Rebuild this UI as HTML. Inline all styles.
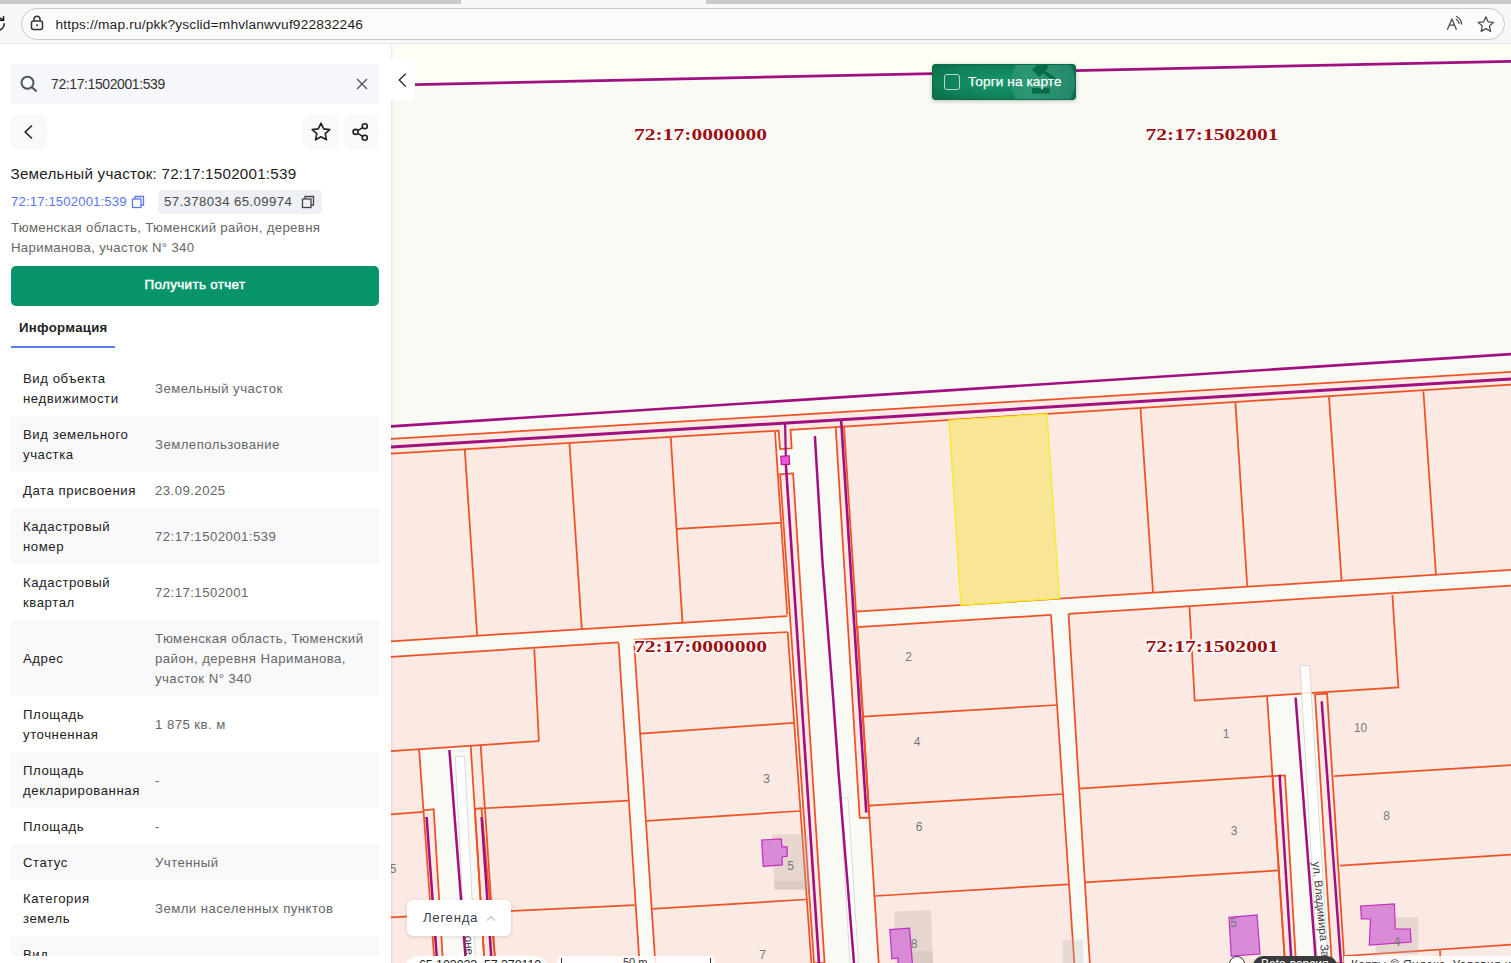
<!DOCTYPE html>
<html><head><meta charset="utf-8">
<style>
*{box-sizing:border-box;margin:0;padding:0}
html,body{width:1511px;height:963px;overflow:hidden;background:#fff;font-family:"Liberation Sans",sans-serif;}
.abs{position:absolute}
#chrome{position:absolute;left:0;top:0;width:1511px;height:44px;background:#f7f7f7;border-bottom:1px solid #e9e9e9}
#tabstrip{position:absolute;left:0;top:0;width:1511px;height:4px;background:#cbcbcb}
#tabgap{position:absolute;left:461px;top:0;width:245px;height:4px;background:#f7f7f7;border-radius:0 0 0 0}
#addr{position:absolute;left:21px;top:8px;width:1484px;height:32px;border:1px solid #c9c9c9;border-radius:16px;background:#fcfcfc}
#url{position:absolute;left:55.5px;top:16.5px;font-size:13.7px;color:#1f1f1f;letter-spacing:0.18px;white-space:nowrap}
#panel{position:absolute;left:0;top:44px;width:391px;height:919px;background:#fff}
.search{position:absolute;left:11px;top:64px;width:368px;height:40px;background:#f6f7fa;border-radius:2px}
.sq{position:absolute;width:36px;height:36px;border-radius:8px;background:#f8f9fb}
.title{position:absolute;left:10.5px;top:164.5px;font-size:15.2px;color:#1e1e1e;white-space:nowrap;letter-spacing:0.23px}
.link{position:absolute;left:11px;top:194px;font-size:13.2px;color:#5a78f0;white-space:nowrap;letter-spacing:0.12px}
.chip{position:absolute;left:158px;top:190px;width:164px;height:24px;background:#eef0f5;border-radius:4px}
.chiptext{position:absolute;left:164px;top:194px;font-size:13.2px;color:#4a4a4a;white-space:nowrap;letter-spacing:0.4px}
.addrtext{position:absolute;left:11px;top:217.5px;font-size:13.2px;line-height:20px;color:#666;width:370px;letter-spacing:0.34px}
.btn{position:absolute;left:11px;top:266px;width:368px;height:40px;background:#06946a;border-radius:5px;color:#fff;font-size:13.4px;font-weight:normal;-webkit-text-stroke:0.45px #fff;letter-spacing:0.35px;text-align:center;line-height:38px}
.tab{position:absolute;left:19px;top:319.5px;font-size:13.2px;font-weight:bold;color:#222;letter-spacing:0.3px}
.tabline{position:absolute;left:11px;top:345.5px;width:104px;height:2px;background:#5a7cf5}
table{position:absolute;left:11px;top:360px;width:368px;border-collapse:collapse}
td{font-size:13.2px;line-height:20px;padding:9px 0 7px 12px;vertical-align:middle}
td.l{color:#222;width:133px;letter-spacing:0.55px}
td.v{color:#666;padding-left:11px;letter-spacing:0.45px}
tr:nth-child(even){background:#f9f9fb}
#map{position:absolute;left:391px;top:44px;width:1120px;height:919px;overflow:hidden;background:#fafaf4}
#mapsvg{position:absolute;left:0;top:0}
</style></head><body>
<div id="chrome">
  <div id="tabstrip"></div>
  <div id="tabgap"></div>
  <div id="addr"></div>
  <svg class="abs" style="left:0;top:14px" width="8" height="20" viewBox="0 0 8 20"><path d="M4.4 9.2 A7.3 7.3 0 0 1 -2.5 16.6" fill="none" stroke="#222" stroke-width="1.5"/><path d="M3.5 2.2 V6.3 H-1" fill="none" stroke="#111" stroke-width="1.6"/><path d="M-1 3.6 Q1.2 4.2 2.9 5.9" fill="none" stroke="#222" stroke-width="1.3"/></svg>
  <svg class="abs" style="left:30px;top:15px" width="14" height="16" viewBox="0 0 14 16"><rect x="1.5" y="6" width="11" height="8.5" rx="2" fill="none" stroke="#333" stroke-width="1.5"/><path d="M4 6 V4.3 A3 3 0 0 1 10 4.3 V6" fill="none" stroke="#333" stroke-width="1.5"/><circle cx="7" cy="10.2" r="1" fill="#333"/></svg>
  <div id="url">https://map.ru/pkk?ysclid=mhvlanwvuf922832246</div>
  <svg class="abs" style="left:1440px;top:10px" width="60" height="26" viewBox="1440 10 60 26"><path d="M1447.3 29.7 L1451.9 18.9 L1456.5 29.7 M1448.9 25.1 H1454.9" fill="none" stroke="#4a4a4a" stroke-width="1.25" stroke-linejoin="round"/><path d="M1456.4 16.3 Q1461.2 19.2 1461.6 24.1 M1456.2 19.2 Q1458.7 20.9 1459.1 23.5" fill="none" stroke="#4a4a4a" stroke-width="1.2" stroke-linecap="round"/><path d="M1485.90,16.80 L1488.10,21.84 L1493.58,22.38 L1489.47,26.03 L1490.64,31.40 L1485.90,28.62 L1481.16,31.40 L1482.33,26.03 L1478.22,22.38 L1483.70,21.84 Z" fill="none" stroke="#4a4a4a" stroke-width="1.25" stroke-linejoin="round"/></svg>
</div>

<div id="panel"></div>
<div class="search"></div>
<svg class="abs" style="left:19px;top:75px" width="20" height="18" viewBox="0 0 20 18"><circle cx="8.5" cy="7.8" r="6" fill="none" stroke="#4e5560" stroke-width="2"/><path d="M13 12.2 L17.5 16.5" stroke="#4e5560" stroke-width="2"/></svg>
<div class="abs" style="left:51px;top:75.5px;font-size:14px;color:#333;letter-spacing:-0.4px">72:17:1502001:539</div>
<svg class="abs" style="left:356px;top:78px" width="12" height="12" viewBox="0 0 12 12"><path d="M1 1 L11 11 M11 1 L1 11" stroke="#555" stroke-width="1.4"/></svg>

<div class="sq" style="left:11px;top:114px"></div>
<svg class="abs" style="left:22px;top:123px" width="14" height="18" viewBox="0 0 14 18"><path d="M10 2.5 L3.2 9 L10 15.5" fill="none" stroke="#222" stroke-width="1.6"/></svg>
<div class="sq" style="left:303px;top:114px"></div>
<svg class="abs" style="left:310px;top:121px" width="22" height="22" viewBox="0 0 22 22"><path d="M11 2.2 L13.7 7.9 L19.8 8.6 L15.2 12.7 L16.5 18.8 L11 15.7 L5.5 18.8 L6.8 12.7 L2.2 8.6 L8.3 7.9 Z" fill="none" stroke="#222" stroke-width="1.6" stroke-linejoin="round"/></svg>
<div class="sq" style="left:343px;top:114px"></div>
<svg class="abs" style="left:350px;top:121px" width="22" height="22" viewBox="0 0 22 22"><circle cx="14.8" cy="5.2" r="2.5" fill="none" stroke="#222" stroke-width="1.6"/><circle cx="5.6" cy="10.9" r="2.5" fill="none" stroke="#222" stroke-width="1.6"/><circle cx="14.8" cy="16.8" r="2.5" fill="none" stroke="#222" stroke-width="1.6"/><path d="M7.8 9.6 L12.6 6.6 M7.8 12.3 L12.6 15.4" stroke="#222" stroke-width="1.6"/></svg>

<div class="title">Земельный участок: 72:17:1502001:539</div>
<div class="link">72:17:1502001:539</div>
<svg class="abs" style="left:131px;top:195px" width="14" height="14" viewBox="0 0 14 14"><rect x="1.5" y="4" width="8.5" height="8.5" fill="none" stroke="#5a78f0" stroke-width="1.3"/><path d="M4 4 V1.5 H12.5 V10 H10" fill="none" stroke="#5a78f0" stroke-width="1.3"/></svg>
<div class="chip"></div>
<div class="chiptext">57.378034 65.09974</div>
<svg class="abs" style="left:301px;top:195px" width="14" height="14" viewBox="0 0 14 14"><rect x="1.5" y="4" width="8.5" height="8.5" fill="none" stroke="#444" stroke-width="1.3"/><path d="M4 4 V1.5 H12.5 V10 H10" fill="none" stroke="#444" stroke-width="1.3"/></svg>
<div class="addrtext">Тюменская область, Тюменский район, деревня<br>Нариманова, участок N° 340</div>
<div class="btn">Получить отчет</div>
<div class="tab">Информация</div>
<div class="tabline"></div>
<table>
<tr style="height:56px"><td class="l">Вид объекта<br>недвижимости</td><td class="v">Земельный участок</td></tr>
<tr style="height:56px"><td class="l">Вид земельного<br>участка</td><td class="v">Землепользование</td></tr>
<tr style="height:36px"><td class="l">Дата присвоения</td><td class="v">23.09.2025</td></tr>
<tr style="height:56px"><td class="l">Кадастровый<br>номер</td><td class="v">72:17:1502001:539</td></tr>
<tr style="height:56px"><td class="l">Кадастровый<br>квартал</td><td class="v">72:17:1502001</td></tr>
<tr style="height:76px"><td class="l">Адрес</td><td class="v">Тюменская область, Тюменский<br>район, деревня Нариманова,<br>участок N° 340</td></tr>
<tr style="height:56px"><td class="l">Площадь<br>уточненная</td><td class="v">1 875 кв. м</td></tr>
<tr style="height:56px"><td class="l">Площадь<br>декларированная</td><td class="v">-</td></tr>
<tr style="height:36px"><td class="l">Площадь</td><td class="v">-</td></tr>
<tr style="height:36px"><td class="l">Статус</td><td class="v">Учтенный</td></tr>
<tr style="height:56px"><td class="l">Категория<br>земель</td><td class="v">Земли населенных пунктов</td></tr>
<tr style="height:56px"><td class="l">Вид<br>&nbsp;</td><td class="v"></td></tr>
</table>
<div class="abs" style="left:0;top:956px;width:391px;height:7px;background:#fff"></div>

<div id="map">
<svg id="mapsvg" width="1120" height="919" viewBox="391 44 1120 919">
<polygon points="391.0,44.0 1511.0,44.0 1511.0,61.3 415.0,84.6 391.0,85.0" fill="#fefef5" stroke="none" stroke-width="1.75" />
<polygon points="391.0,439.0 1511.0,371.9 1511.0,963.0 391.0,963.0" fill="#fbe9e3" stroke="none" stroke-width="1.75" />
<polygon points="391.0,641.3 1511.0,569.9 1511.0,585.6 391.0,656.9" fill="#fafaf4" stroke="none" stroke-width="1.75" />
<polygon points="775.0,431.7 778.6,430.6 780.1,449.0 791.7,448.3 790.5,429.9 835.7,427.2 859.7,817.8 869.3,817.8 878.7,963.0 811.4,963.0" fill="#fafaf4" stroke="none" stroke-width="1.75" />
<polygon points="419.1,749.5 470.7,745.9 484.5,963.0 435.0,963.0" fill="#fafaf4" stroke="none" stroke-width="1.75" />
<polygon points="618.6,643.0 634.0,641.2 655.3,963.0 639.5,963.0" fill="#fafaf4" stroke="none" stroke-width="1.75" />
<polygon points="1051.0,614.7 1068.5,614.0 1089.8,963.0 1074.3,963.0" fill="#fafaf4" stroke="none" stroke-width="1.75" />
<polygon points="1267.1,696.7 1315.0,694.4 1331.8,963.0 1285.0,963.0" fill="#fafaf4" stroke="none" stroke-width="1.75" />
<polygon points="835.7,427.2 844.0,426.5 869.3,817.8 859.7,817.8" fill="#fbe9e3" stroke="#ec5226" stroke-width="1.75" />
<polygon points="780.1,474.2 793.1,473.5 824.6,963.0 814.0,963.0" fill="#fbe9e3" stroke="#ec5226" stroke-width="1.75" />
<polygon points="423.5,810.3 433.7,809.2 443.0,963.0 434.5,963.0" fill="#fbe9e3" stroke="#ec5226" stroke-width="1.75" />
<polygon points="474.9,808.9 481.5,808.3 495.3,963.0 484.5,963.0" fill="#fbe9e3" stroke="#ec5226" stroke-width="1.75" />
<polygon points="1272.6,776.2 1285.0,775.4 1296.0,963.0 1285.0,963.0" fill="#fbe9e3" stroke="#ec5226" stroke-width="1.75" />
<polygon points="1315.0,694.4 1327.1,693.6 1344.4,963.0 1331.8,963.0" fill="#fbe9e3" stroke="#ec5226" stroke-width="1.75" />
<polyline points="391.0,439.0 1511.0,371.9" fill="none" stroke="#ec5226" stroke-width="1.75" stroke-linejoin="miter" />
<polyline points="391.0,453.6 778.6,430.6 780.1,449.0 791.7,448.3 790.5,429.9 835.7,427.2" fill="none" stroke="#ec5226" stroke-width="1.75" stroke-linejoin="miter" />
<polyline points="844.0,426.6 1511.0,384.7" fill="none" stroke="#ec5226" stroke-width="1.75" stroke-linejoin="miter" />
<polyline points="464.8,449.7 477.1,635.1" fill="none" stroke="#ec5226" stroke-width="1.75" stroke-linejoin="miter" />
<polyline points="569.5,443.7 581.8,629.1" fill="none" stroke="#ec5226" stroke-width="1.75" stroke-linejoin="miter" />
<polyline points="670.8,438.0 682.5,623.1" fill="none" stroke="#ec5226" stroke-width="1.75" stroke-linejoin="miter" />
<polyline points="676.5,528.8 780.5,522.8" fill="none" stroke="#ec5226" stroke-width="1.75" stroke-linejoin="miter" />
<polyline points="775.0,431.7 787.3,614.8" fill="none" stroke="#ec5226" stroke-width="1.75" stroke-linejoin="miter" />
<polyline points="1140.5,408.5 1153.0,592.3" fill="none" stroke="#ec5226" stroke-width="1.75" stroke-linejoin="miter" />
<polyline points="1235.4,402.4 1247.3,587.0" fill="none" stroke="#ec5226" stroke-width="1.75" stroke-linejoin="miter" />
<polyline points="1329.0,397.0 1341.6,581.0" fill="none" stroke="#ec5226" stroke-width="1.75" stroke-linejoin="miter" />
<polyline points="1423.4,391.2 1436.0,575.3" fill="none" stroke="#ec5226" stroke-width="1.75" stroke-linejoin="miter" />
<polyline points="391.0,641.3 787.3,616.1" fill="none" stroke="#ec5226" stroke-width="1.75" stroke-linejoin="miter" />
<polyline points="856.0,611.7 1511.0,569.9" fill="none" stroke="#ec5226" stroke-width="1.75" stroke-linejoin="miter" />
<polyline points="391.0,656.9 618.6,642.4" fill="none" stroke="#ec5226" stroke-width="1.75" stroke-linejoin="miter" />
<polyline points="634.0,639.9 787.7,632.0" fill="none" stroke="#ec5226" stroke-width="1.75" stroke-linejoin="miter" />
<polyline points="857.4,627.2 1051.0,614.9" fill="none" stroke="#ec5226" stroke-width="1.75" stroke-linejoin="miter" />
<polyline points="1068.5,613.8 1511.0,585.6" fill="none" stroke="#ec5226" stroke-width="1.75" stroke-linejoin="miter" />
<polyline points="787.7,632.0 811.4,963.0" fill="none" stroke="#ec5226" stroke-width="1.75" stroke-linejoin="miter" />
<polyline points="857.4,626.8 878.7,963.0" fill="none" stroke="#ec5226" stroke-width="1.75" stroke-linejoin="miter" />
<polyline points="618.6,643.0 639.5,963.0" fill="none" stroke="#ec5226" stroke-width="1.75" stroke-linejoin="miter" />
<polyline points="634.0,641.2 655.3,963.0" fill="none" stroke="#ec5226" stroke-width="1.75" stroke-linejoin="miter" />
<polyline points="1051.0,614.7 1074.3,963.0" fill="none" stroke="#ec5226" stroke-width="1.75" stroke-linejoin="miter" />
<polyline points="1068.5,614.0 1089.8,963.0" fill="none" stroke="#ec5226" stroke-width="1.75" stroke-linejoin="miter" />
<polyline points="1267.1,696.7 1285.0,963.0" fill="none" stroke="#ec5226" stroke-width="1.75" stroke-linejoin="miter" />
<polyline points="419.1,749.5 423.5,810.3" fill="none" stroke="#ec5226" stroke-width="1.75" stroke-linejoin="miter" />
<polyline points="470.7,745.9 484.5,963.0" fill="none" stroke="#ec5226" stroke-width="1.75" stroke-linejoin="miter" />
<polyline points="480.6,744.9 495.3,963.0" fill="none" stroke="#ec5226" stroke-width="1.75" stroke-linejoin="miter" />
<polyline points="534.3,649.2 538.9,741.1" fill="none" stroke="#ec5226" stroke-width="1.75" stroke-linejoin="miter" />
<polyline points="391.0,751.2 538.9,741.1" fill="none" stroke="#ec5226" stroke-width="1.75" stroke-linejoin="miter" />
<polyline points="391.0,656.9 391.0,656.9" fill="none" stroke="#ec5226" stroke-width="1.75" stroke-linejoin="miter" />
<polyline points="391.0,814.5 423.5,811.8" fill="none" stroke="#ec5226" stroke-width="1.75" stroke-linejoin="miter" />
<polyline points="391.0,917.5 434.0,915.2" fill="none" stroke="#ec5226" stroke-width="1.75" stroke-linejoin="miter" />
<polyline points="481.0,808.5 628.5,800.7" fill="none" stroke="#ec5226" stroke-width="1.75" stroke-linejoin="miter" />
<polyline points="490.0,912.0 634.7,905.2" fill="none" stroke="#ec5226" stroke-width="1.75" stroke-linejoin="miter" />
<polyline points="640.6,733.6 793.7,722.8" fill="none" stroke="#ec5226" stroke-width="1.75" stroke-linejoin="miter" />
<polyline points="646.8,820.9 800.1,811.0" fill="none" stroke="#ec5226" stroke-width="1.75" stroke-linejoin="miter" />
<polyline points="652.3,908.9 805.8,899.5" fill="none" stroke="#ec5226" stroke-width="1.75" stroke-linejoin="miter" />
<polyline points="863.2,716.6 1056.9,705.0" fill="none" stroke="#ec5226" stroke-width="1.75" stroke-linejoin="miter" />
<polyline points="869.0,805.7 1062.7,794.0" fill="none" stroke="#ec5226" stroke-width="1.75" stroke-linejoin="miter" />
<polyline points="874.9,896.0 1068.5,884.3" fill="none" stroke="#ec5226" stroke-width="1.75" stroke-linejoin="miter" />
<polyline points="1079.3,788.7 1272.6,776.2" fill="none" stroke="#ec5226" stroke-width="1.75" stroke-linejoin="miter" />
<polyline points="1084.8,882.4 1279.0,870.4" fill="none" stroke="#ec5226" stroke-width="1.75" stroke-linejoin="miter" />
<polyline points="1334.1,776.2 1511.0,765.0" fill="none" stroke="#ec5226" stroke-width="1.75" stroke-linejoin="miter" />
<polyline points="1340.0,865.6 1511.0,854.5" fill="none" stroke="#ec5226" stroke-width="1.75" stroke-linejoin="miter" />
<polyline points="1344.7,956.0 1511.0,944.7" fill="none" stroke="#ec5226" stroke-width="1.75" stroke-linejoin="miter" />
<polyline points="1440.0,950.5 1440.6,963.0" fill="none" stroke="#ec5226" stroke-width="1.75" stroke-linejoin="miter" />
<polyline points="1189.5,607.0 1194.7,700.5 1398.4,687.4 1392.4,595.0" fill="none" stroke="#ec5226" stroke-width="1.75" stroke-linejoin="miter" />
<polygon points="949.0,420.3 1047.0,414.0 1059.5,598.5 960.8,605.0" fill="#f8e596" stroke="#f2ee22" stroke-width="1.3" />
<polygon points="455.2,756.3 464.5,756.3 475.5,963.0 466.0,963.0" fill="#ffffff" stroke="#cfcfcf" stroke-width="0.8" />
<polygon points="840.0,798.0 848.0,798.0 858.5,963.0 850.0,963.0" fill="#ffffff" stroke="#d0d0d0" stroke-width="0.8" />
<polygon points="1300.0,665.6 1309.5,665.6 1328.2,963.0 1317.5,963.0" fill="#ffffff" stroke="#d0d0d0" stroke-width="0.8" fill-opacity="0.85"/>
<polyline points="415.0,84.6 1511.0,61.3" fill="none" stroke="#a10f80" stroke-width="2.7" stroke-linejoin="miter" />
<polyline points="391.0,426.3 1511.0,354.1" fill="none" stroke="#a10f80" stroke-width="2.7" stroke-linejoin="miter" />
<polyline points="391.0,446.9 1511.0,379.0" fill="none" stroke="#a10f80" stroke-width="3.0" stroke-linejoin="miter" />
<polyline points="785.1,423.4 785.8,456.6" fill="none" stroke="#a10f80" stroke-width="2.2" stroke-linejoin="miter" />
<polyline points="785.8,463.3 819.0,963.0" fill="none" stroke="#a10f80" stroke-width="2.6" stroke-linejoin="miter" />
<polyline points="814.9,436.1 822.3,560.0 833.3,700.0 838.5,772.0 854.0,963.0" fill="none" stroke="#a10f80" stroke-width="2.5" stroke-linejoin="miter" />
<polyline points="841.2,420.8 866.3,812.7" fill="none" stroke="#a10f80" stroke-width="2.6" stroke-linejoin="miter" />
<polyline points="449.4,750.0 466.0,963.0" fill="none" stroke="#a10f80" stroke-width="2.5" stroke-linejoin="miter" />
<polyline points="426.6,817.0 437.2,963.0" fill="none" stroke="#a10f80" stroke-width="2.5" stroke-linejoin="miter" />
<polyline points="481.6,817.0 491.7,963.0" fill="none" stroke="#a10f80" stroke-width="2.5" stroke-linejoin="miter" />
<polyline points="1279.6,774.6 1291.5,963.0" fill="none" stroke="#a10f80" stroke-width="2.5" stroke-linejoin="miter" />
<polyline points="1295.6,697.5 1316.0,963.0" fill="none" stroke="#a10f80" stroke-width="2.5" stroke-linejoin="miter" />
<polyline points="1321.7,701.4 1341.0,963.0" fill="none" stroke="#a10f80" stroke-width="2.5" stroke-linejoin="miter" />
<rect x="781" y="456" width="8.5" height="8.5" fill="#ee55dd" stroke="#a10f80" stroke-width="1" transform="rotate(-4 785.3 460.3)"/>
<polygon points="771.9,834.4 807.7,834.4 809.6,889.4 774.5,889.4" fill="#b9a9a6" fill-opacity="0.3"/>
<polygon points="774,881.5 809.3,880.5 809.6,889.4 774.5,889.4" fill="#a08a86" fill-opacity="0.15"/>
<polygon points="761.7,840 781.3,838.9 782,846.8 787,846.8 787.3,856.2 782,857 782.4,864.9 763.2,866.4" fill="#d98bd7" stroke="#c02fc0" stroke-width="1.2"/>
<polygon points="894.2,911.5 931,910.3 933,963 895.4,963" fill="#b9a9a6" fill-opacity="0.3"/>
<polygon points="897.5,952.5 933,950.8 933,963 897.5,963" fill="#a08a86" fill-opacity="0.15"/>
<polygon points="889.8,929.6 909.5,928.2 912.4,963.5 898.2,963.5 898.2,957.9 891.9,958.9" fill="#d98bd7" stroke="#c02fc0" stroke-width="1.2"/>
<polygon points="1062.7,939.7 1083.2,939.7 1083.2,963 1062.7,963" fill="#b9b9b9" fill-opacity="0.3"/>
<polygon points="1229,917.3 1257,915 1260,954 1231.3,956" fill="#d98bd7" stroke="#c02fc0" stroke-width="1.2"/>
<polygon points="1375.7,917.3 1418.3,917.3 1418.3,954 1375.7,954" fill="#b9a9a6" fill-opacity="0.3"/>
<polygon points="1360.6,906 1394.4,904 1395.2,929 1410.3,929 1411,942 1369.3,945 1370.5,919 1361.4,919" fill="#d98bd7" stroke="#c02fc0" stroke-width="1.2"/>
<text x="908.6" y="661.1" text-anchor="middle" font-family="Liberation Sans" font-size="12" fill="#777">2</text>
<text x="917" y="746.3" text-anchor="middle" font-family="Liberation Sans" font-size="12" fill="#777">4</text>
<text x="919" y="830.7" text-anchor="middle" font-family="Liberation Sans" font-size="12" fill="#777">6</text>
<text x="914" y="947.5" text-anchor="middle" font-family="Liberation Sans" font-size="12" fill="#777">8</text>
<text x="766.6" y="782.7" text-anchor="middle" font-family="Liberation Sans" font-size="12" fill="#777">3</text>
<text x="790.7" y="870.1" text-anchor="middle" font-family="Liberation Sans" font-size="12" fill="#777">5</text>
<text x="762.5" y="958.7" text-anchor="middle" font-family="Liberation Sans" font-size="12" fill="#777">7</text>
<text x="1226" y="737.5" text-anchor="middle" font-family="Liberation Sans" font-size="12" fill="#777">1</text>
<text x="1234" y="834.5" text-anchor="middle" font-family="Liberation Sans" font-size="12" fill="#777">3</text>
<text x="1360.6" y="731.5" text-anchor="middle" font-family="Liberation Sans" font-size="12" fill="#777">10</text>
<text x="1386.5" y="820.0" text-anchor="middle" font-family="Liberation Sans" font-size="12" fill="#777">8</text>
<text x="1233.7" y="926.5" text-anchor="middle" font-family="Liberation Sans" font-size="12" fill="#777">5</text>
<text x="1397" y="945.5" text-anchor="middle" font-family="Liberation Sans" font-size="12" fill="#777">4</text>
<text x="393" y="872.8" text-anchor="middle" font-family="Liberation Sans" font-size="12" fill="#777">5</text>
<text x="634.0" y="139.5" textLength="133" lengthAdjust="spacingAndGlyphs" font-family="Liberation Serif" font-weight="bold" font-size="17.2" fill="#a00f0f" stroke="#ffffff" stroke-width="3" paint-order="stroke" stroke-linejoin="round">72:17:0000000</text>
<text x="1145.5" y="139.5" textLength="133" lengthAdjust="spacingAndGlyphs" font-family="Liberation Serif" font-weight="bold" font-size="17.2" fill="#a00f0f" stroke="#ffffff" stroke-width="3" paint-order="stroke" stroke-linejoin="round">72:17:1502001</text>
<text x="634.0" y="652.0" textLength="133" lengthAdjust="spacingAndGlyphs" font-family="Liberation Serif" font-weight="bold" font-size="17.2" fill="#a00f0f" stroke="#ffffff" stroke-width="3" paint-order="stroke" stroke-linejoin="round">72:17:0000000</text>
<text x="1145.5" y="652.0" textLength="133" lengthAdjust="spacingAndGlyphs" font-family="Liberation Serif" font-weight="bold" font-size="17.2" fill="#a00f0f" stroke="#ffffff" stroke-width="3" paint-order="stroke" stroke-linejoin="round">72:17:1502001</text>
<text x="0" y="0" font-family="Liberation Sans" font-size="11.5" fill="#444" transform="translate(1312.5,862) rotate(84.6)">ул. Владимира Зак</text>
<text x="0" y="0" font-family="Liberation Sans" font-size="11.5" fill="#444" transform="translate(464.5,936) rotate(86)">оне</text>
</svg>
<div class="abs" style="left:0;top:0;width:3px;height:919px;background:linear-gradient(90deg,rgba(0,0,0,0.07),rgba(0,0,0,0))"></div>
<!-- collapse -->
<div class="abs" style="left:0;top:16px;width:24px;height:40px;background:#fff;border-radius:0 6px 6px 0"></div>
<svg class="abs" style="left:6px;top:28px" width="12" height="16" viewBox="0 0 12 16"><path d="M8.8 1.8 L2.2 8 L8.8 14.6" fill="none" stroke="#222" stroke-width="1.3"/></svg>
<!-- torgi -->
<div class="abs" style="left:541px;top:20px;width:144px;height:36px;border-radius:3px;background:radial-gradient(ellipse 60% 75% at 45% 50%,#16976c 0%,#0f7f57 65%,#0a6c4a 100%);box-shadow:0 1px 4px rgba(0,0,0,0.25);overflow:hidden;border:1px solid #0b6a48">
  <div class="abs" style="left:78px;top:-15px;width:64px;height:64px;border-radius:50%;background:radial-gradient(circle at 30% 50%,#2c9a74,#23836a)"></div>
  <svg class="abs" style="left:81.5px;top:-1px" width="40" height="36" viewBox="1014 64 40 36"><rect x="1031" y="88" width="17.5" height="5.6" fill="#056c49"/><polygon points="1031.2,69.8 1038.1,76.9 1048,67 1041,60" fill="#056c49"/><path d="M1043,72 L1056.5,81.5" stroke="#056c49" stroke-width="3.6"/></svg>
  <div class="abs" style="left:10.5px;top:8.5px;width:16px;height:16px;border:1.2px solid rgba(255,255,255,0.7);border-radius:3px"></div>
  <div class="abs" style="left:35px;top:9px;font-size:13.6px;color:#fff;white-space:nowrap;letter-spacing:0.1px;-webkit-text-stroke:0.25px #fff">Торги на карте</div>
</div>
<!-- legend -->
<div class="abs" style="left:16px;top:855.5px;width:104px;height:36px;background:#fff;border-radius:6px;box-shadow:0 1px 4px rgba(0,0,0,0.12)">
  <div class="abs" style="left:16px;top:10px;font-size:13.2px;color:#3e4148;letter-spacing:0.7px">Легенда</div>
  <svg class="abs" style="left:77.5px;top:14px" width="12" height="8" viewBox="0 0 12 8"><path d="M2 6.5 L6 2.5 L10 6.5" fill="none" stroke="#c3c8d6" stroke-width="1.5"/></svg>
</div>
<!-- bottom coordinate pill -->
<div class="abs" style="left:12.5px;top:912px;width:145px;height:30px;background:#fff;border-radius:15px"><div class="abs" style="left:15.5px;top:2px;font-size:12.5px;color:#222;white-space:nowrap;letter-spacing:-0.1px">65.103023 &nbsp;57.378110</div></div>
<div class="abs" style="left:166px;top:912px;width:158px;height:30px;background:rgba(255,255,255,0.85);border-radius:4px"><div class="abs" style="left:4px;top:2px;width:1px;height:8px;background:#333"></div><div class="abs" style="left:153px;top:2px;width:1px;height:8px;background:#333"></div><div class="abs" style="left:66px;top:0px;font-size:11px;color:#333">50 m</div></div>
<!-- bottom right attribution -->
<div class="abs" style="left:838px;top:912px;width:16px;height:16px;border:1.3px solid #333;border-radius:50%;background:#fff"></div>
<div class="abs" style="left:862px;top:912px;width:84px;height:24px;background:#3b3b3b;border-radius:10px"><div class="abs" style="left:8px;top:1px;font-size:12px;color:#fff;white-space:nowrap">Beta-версия</div></div>
<div class="abs" style="left:953px;top:912px;width:170px;height:24px;background:rgba(255,255,255,0.85)"><div class="abs" style="left:7px;top:2px;font-size:12px;color:#333;white-space:nowrap;letter-spacing:0.3px">Карты © Яндекс &nbsp;Условия ис</div></div>
</div>
</body></html>
